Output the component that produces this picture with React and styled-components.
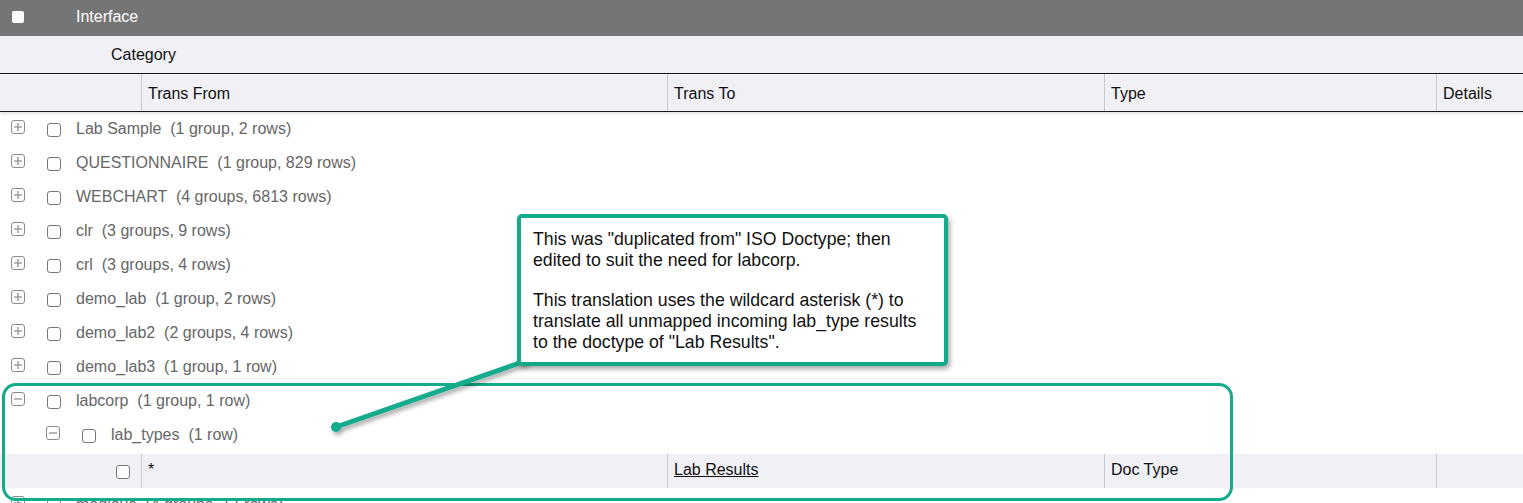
import React from "react";
import styled, { createGlobalStyle } from "styled-components";

const TEAL = "#12ab8c";

const GlobalStyle = createGlobalStyle`
  html, body {
    margin: 0;
    padding: 0;
    background: #fff;
  }
  body {
    font-family: "Liberation Sans", Arial, sans-serif;
  }
`;

const Page = styled.div`
  position: relative;
  width: 1523px;
  height: 503px;
  overflow: hidden;
  background: #fff;
`;

const TopBar = styled.div`
  display: flex;
  align-items: center;
  height: 36px;
  padding-bottom: 2px;
  box-sizing: border-box;
  background: #757575;
  color: #fff;
  font-size: 16px;
`;

const TopCheck = styled.span`
  display: block;
  width: 12px;
  height: 12px;
  margin: 0 52px 0 12px;
  background: #fff;
  border-radius: 2px;
`;

const CategoryRow = styled.div`
  display: flex;
  align-items: center;
  height: 37px;
  padding-left: 111px;
  background: #f0f0f5;
  border-bottom: 1px solid #1a1a1a;
  font-size: 16px;
  color: #111;
`;

const ColGrid = styled.div`
  display: grid;
  grid-template-columns: 141px 526px 437px 332px 1fr;
  height: ${(p) => p.$h}px;
  background: #f0f0f5;
  margin-top: ${(p) => p.$mt || 0}px;
  ${(p) =>
    p.$head &&
    `
    border-bottom: 1px solid #1a1a1a;
    box-shadow: 0 2px 3px rgba(0,0,0,0.12);
    position: relative;
  `}
`;

const Cell = styled.div`
  display: flex;
  align-items: center;
  padding-left: 6px;
  padding-top: ${(p) => (p.$drop ? "2px" : "0")};
  padding-bottom: ${(p) => (p.$lift ? "3px" : "0")};
  font-size: 16px;
  color: #111;
  border-left: ${(p) => (p.$first ? "none" : "1.5px solid #c8c8cc")};
  justify-content: ${(p) => (p.$first ? "flex-end" : "flex-start")};
  padding-right: ${(p) => (p.$first ? "11px" : "0")};
`;

const LinkText = styled.span`
  text-decoration: underline;
  color: #111;
`;

const TreeRow = styled.div`
  display: flex;
  align-items: center;
  height: 34px;
  padding-left: ${(p) => 11 + p.$level * 35}px;
  font-size: 16px;
  color: #666;
  white-space: pre;
`;

const Toggle = styled.svg`
  flex: none;
  width: 14px;
  height: 14px;
  margin-right: 22px;
  margin-top: -4px;
`;

const Box = styled.span`
  flex: none;
  display: block;
  width: 12px;
  height: 12px;
  border: 1px solid #777;
  border-radius: 3px;
  background: #fff;
  margin-right: ${(p) => (p.$mr != null ? p.$mr : 15)}px;
  margin-top: 2px;
`;

const Highlight = styled.div`
  position: absolute;
  left: 2px;
  top: 383px;
  width: 1225px;
  height: 112px;
  border: 3px solid ${TEAL};
  border-radius: 14px;
  pointer-events: none;
`;

const Pointer = styled.svg`
  position: absolute;
  left: 0;
  top: 0;
  width: 1523px;
  height: 503px;
  pointer-events: none;
  overflow: visible;
`;

const Callout = styled.div`
  position: absolute;
  left: 517px;
  top: 214px;
  width: 399px;
  height: 124px;
  padding: 11px 12px 9px 12px;
  background: #fff;
  border: 4px solid ${TEAL};
  border-radius: 5px;
  box-shadow: 2px 3px 5px rgba(0, 0, 0, 0.35);
  font-size: 17.7px;
  line-height: 21px;
  color: #111;
`;

const Para = styled.p`
  margin: 0 0 19px 0;
`;

function ToggleIcon({ open }) {
  return (
    <Toggle viewBox="0 0 14 14">
      <rect x="0.5" y="0.5" width="13" height="13" rx="2.5" fill="#fff" stroke="#8a8a8a" />
      <line x1="3" y1="7" x2="11" y2="7" stroke="#8a8a8a" strokeWidth="1.2" />
      {!open && <line x1="7" y1="3" x2="7" y2="11" stroke="#8a8a8a" strokeWidth="1.2" />}
    </Toggle>
  );
}

const groups = [
  ["Lab Sample", "(1 group, 2 rows)"],
  ["QUESTIONNAIRE", "(1 group, 829 rows)"],
  ["WEBCHART", "(4 groups, 6813 rows)"],
  ["clr", "(3 groups, 9 rows)"],
  ["crl", "(3 groups, 4 rows)"],
  ["demo_lab", "(1 group, 2 rows)"],
  ["demo_lab2", "(2 groups, 4 rows)"],
  ["demo_lab3", "(1 group, 1 row)"],
];

export default function App() {
  return (
    <Page>
      <GlobalStyle />
      <TopBar>
        <TopCheck />
        Interface
      </TopBar>
      <CategoryRow>Category</CategoryRow>
      <ColGrid $h={37} $head>
        <Cell $first />
        <Cell $drop>Trans From</Cell>
        <Cell $drop>Trans To</Cell>
        <Cell $drop>Type</Cell>
        <Cell $drop>Details</Cell>
      </ColGrid>

      {groups.map(([name, info]) => (
        <TreeRow key={name} $level={0}>
          <ToggleIcon />
          <Box />
          {name}  {info}
        </TreeRow>
      ))}

      <TreeRow $level={0}>
        <ToggleIcon open />
        <Box />
        labcorp  (1 group, 1 row)
      </TreeRow>
      <TreeRow $level={1}>
        <ToggleIcon open />
        <Box />
        lab_types  (1 row)
      </TreeRow>
      <ColGrid $h={34} $mt={2}>
        <Cell $first>
          <Box $mr={0} />
        </Cell>
        <Cell $lift>*</Cell>
        <Cell $lift>
          <LinkText>Lab Results</LinkText>
        </Cell>
        <Cell $lift>Doc Type</Cell>
        <Cell />
      </ColGrid>
      <TreeRow $level={0}>
        <ToggleIcon />
        <Box />
        medious  (4 groups, 17 rows)
      </TreeRow>

      <Highlight />
      <Pointer viewBox="0 0 1523 503">
        <defs>
          <filter id="sh" x="-10%" y="-10%" width="130%" height="150%">
            <feDropShadow dx="2" dy="3" stdDeviation="2" floodColor="#000" floodOpacity="0.35" />
          </filter>
        </defs>
        <g filter="url(#sh)">
          <line x1="528" y1="360" x2="336" y2="427" stroke={TEAL} strokeWidth="5" />
          <circle cx="336" cy="427" r="5" fill={TEAL} />
        </g>
      </Pointer>
      <Callout>
        <Para>
          This was "duplicated from" ISO Doctype; then edited to suit the need for labcorp.
        </Para>
        <Para>
          This translation uses the wildcard asterisk (*) to translate all unmapped incoming
          lab_type results to the doctype of "Lab Results".
        </Para>
      </Callout>
    </Page>
  );
}
